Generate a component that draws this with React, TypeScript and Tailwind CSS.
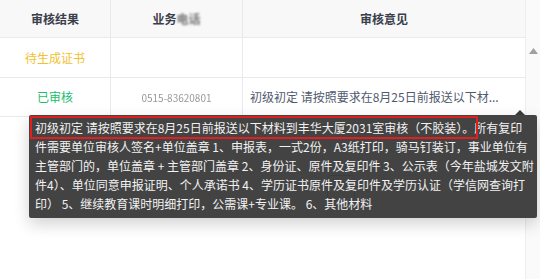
import React from "react";

const lines = [
  "初级初定 请按照要求在8月25日前报送以下材料到丰华大厦2031室审核（不胶装）。所有复印",
  "件需要单位审核人签名+单位盖章 1、申报表，一式2份，A3纸打印，骑马钉装订，事业单位有",
  "主管部门的，单位盖章 + 主管部门盖章 2、身份证、原件及复印件 3、公示表（今年盐城发文附",
  "件4）、单位同意申报证明、个人承诺书 4、学历证书原件及复印件及学历认证（学信网查询打",
  "印） 5、继续教育课时明细打印，公需课+专业课。 6、其他材料",
];

export default function App() {
  return (
    <div
      className="relative w-[540px] h-[279px] bg-white overflow-hidden text-[#515a6e]"
      style={{ fontFamily: '"Noto Sans CJK SC", "Noto Sans", sans-serif' }}
    >
      <div className="flex">
        <div className="w-[525px]">
          {/* header */}
          <div className="flex h-[38px] bg-[#f8f8f9] border-b border-[#e8eaec] text-[12px] font-bold text-[#3a3f4b]">
            <div className="w-[111px] flex items-center justify-center border-r border-[#e8eaec]">审核结果</div>
            <div className="w-[132px] flex items-center justify-center border-r border-[#e8eaec]">
              业务<span className="blur-[0.8px] text-[#777]">电话</span>
            </div>
            <div className="flex-1 flex items-center justify-center">审核意见</div>
          </div>
          {/* row 1 */}
          <div className="flex h-[40px] border-b border-[#e8eaec] text-[12px]">
            <div className="w-[111px] flex items-center justify-center border-r border-[#e8eaec] text-[#f0c230]">待生成证书</div>
            <div className="w-[132px] border-r border-[#e8eaec]" />
            <div className="flex-1" />
          </div>
          {/* row 2 */}
          <div className="flex h-[39px] border-b border-[#e8eaec] text-[12px]">
            <div className="w-[111px] flex items-center justify-center border-r border-[#e8eaec] text-[#19be6b]">已审核</div>
            <div className="w-[132px] flex items-center justify-center border-r border-[#e8eaec] text-[10px] text-[#999] blur-[0.7px]">
              0515-83620801
            </div>
            <div className="flex-1 flex items-center pl-[7px] text-[12px] text-[#515a6e] whitespace-nowrap">
              初级初定 请按照要求在8月25日前报送以下材...
            </div>
          </div>
          {/* pagination, mostly hidden behind the tooltip */}
          <div className="flex h-[90px] items-start justify-end gap-3 pr-4 pt-[58px]">
            <div className="w-[28px] h-[26px] border border-[#2d8cf0] rounded-sm" />
            <div className="w-[60px] h-[26px] border border-[#dcdee2] rounded-sm" />
            <div className="w-[70px] h-[26px] border border-[#dcdee2] rounded-sm" />
          </div>
        </div>
        {/* scrollbar */}
        <div className="w-[15px] h-[279px] bg-[#fafafa] border-l border-[#eee] flex flex-col items-center pt-[48px]">
          <svg width="9" height="6" viewBox="0 0 9 6">
            <path d="M0 6 L4.5 0 L9 6 Z" fill="#a0a0a0" />
          </svg>
        </div>
      </div>

      {/* tooltip */}
      <div className="absolute left-[29px] top-[115px] w-[508px] h-[103px] bg-[#393939]/95 shadow-[0_6px_16px_rgba(0,0,0,0.18)] rounded-[2px]">
        <div className="absolute right-[12px] -top-[5px] w-0 h-0 border-l-[5px] border-r-[5px] border-b-[5px] border-l-transparent border-r-transparent border-b-[#393939]" />
        <div className="pl-[6px] pt-[3px] text-[12px] leading-[19px] text-[#f2f2f2] whitespace-nowrap">
          {lines.map((l) => (
            <div key={l}>{l}</div>
          ))}
        </div>
        <div className="absolute left-[1px] top-[1px] w-[448px] h-[23px] border-2 border-[#e0201f]" />
      </div>
    </div>
  );
}
